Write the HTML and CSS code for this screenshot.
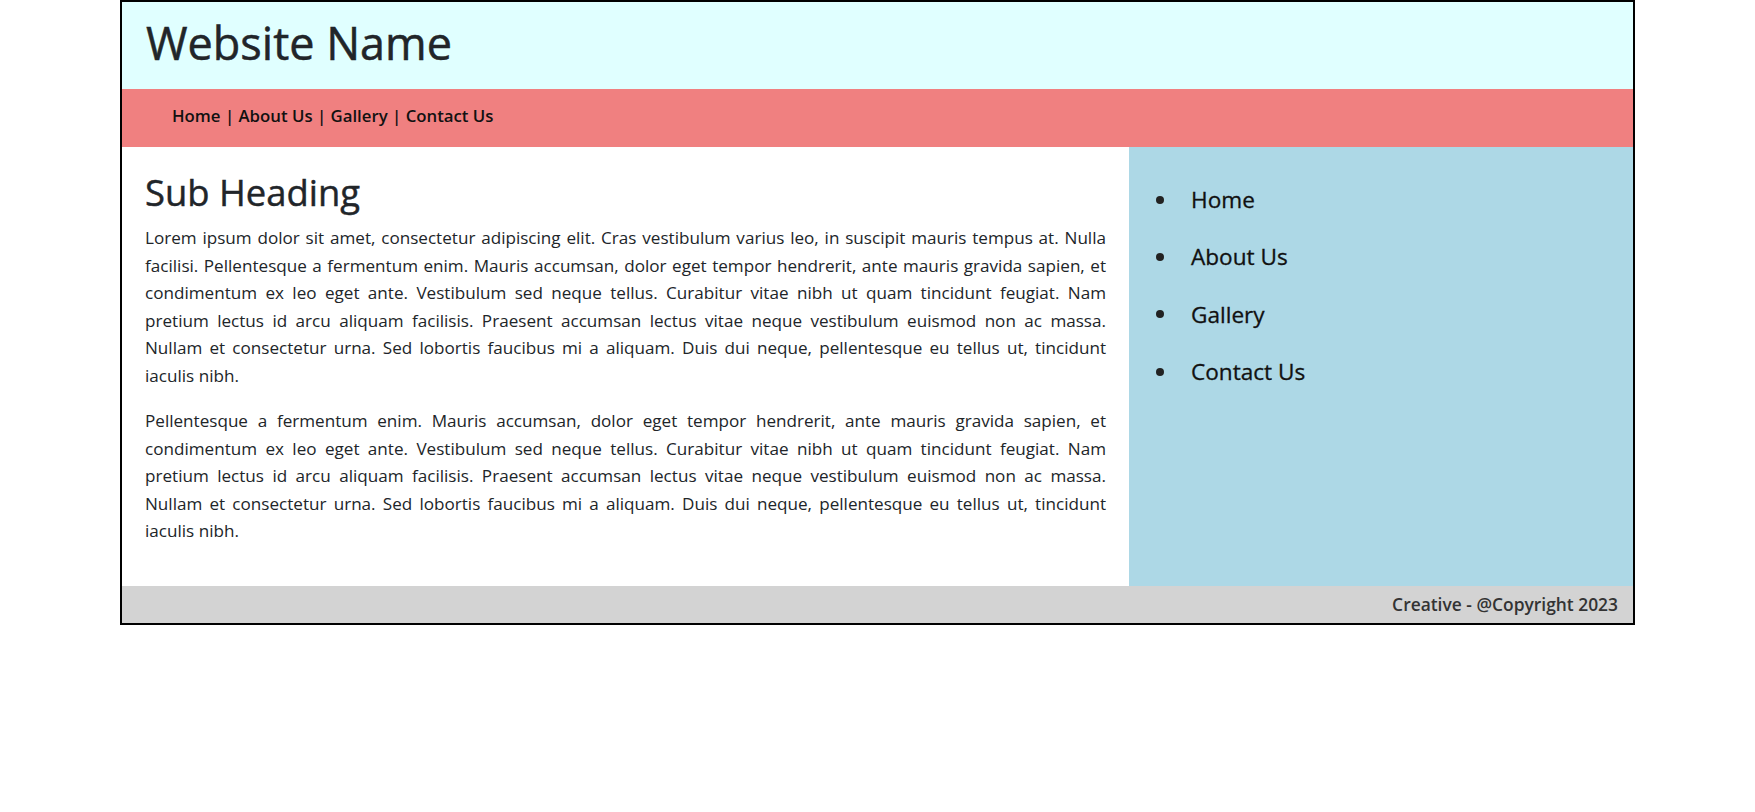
FILE: index.html
```html
<!DOCTYPE html>
<html lang="en">
<head>
<meta charset="utf-8">
<title>Website Name</title>
<link rel="stylesheet" href="styles.css">
</head>
<body>
<div class="page">
  <header class="site-header">
    <h1 class="site-title">Website Name</h1>
  </header>
  <nav class="topnav">Home | About Us | Gallery | Contact Us</nav>
  <div class="content">
    <main class="main">
      <h2 class="sub-heading">Sub Heading</h2>
      <p>Lorem ipsum dolor sit amet, consectetur adipiscing elit. Cras vestibulum varius leo, in suscipit mauris tempus at. Nulla facilisi. Pellentesque a fermentum enim. Mauris accumsan, dolor eget tempor hendrerit, ante mauris gravida sapien, et condimentum ex leo eget ante. Vestibulum sed neque tellus. Curabitur vitae nibh ut quam tincidunt feugiat. Nam pretium lectus id arcu aliquam facilisis. Praesent accumsan lectus vitae neque vestibulum euismod non ac massa. Nullam et consectetur urna. Sed lobortis faucibus mi a aliquam. Duis dui neque, pellentesque eu tellus ut, tincidunt iaculis nibh.</p>
      <p>Pellentesque a fermentum enim. Mauris accumsan, dolor eget tempor hendrerit, ante mauris gravida sapien, et condimentum ex leo eget ante. Vestibulum sed neque tellus. Curabitur vitae nibh ut quam tincidunt feugiat. Nam pretium lectus id arcu aliquam facilisis. Praesent accumsan lectus vitae neque vestibulum euismod non ac massa. Nullam et consectetur urna. Sed lobortis faucibus mi a aliquam. Duis dui neque, pellentesque eu tellus ut, tincidunt iaculis nibh.</p>
    </main>
    <aside class="sidebar">
      <ul class="side-list">
        <li>Home</li>
        <li>About Us</li>
        <li>Gallery</li>
        <li>Contact Us</li>
      </ul>
    </aside>
  </div>
  <footer class="site-footer">Creative - @Copyright 2023</footer>
</div>
</body>
</html>
```
FILE: styles.css
```css
* { box-sizing: border-box; }

body {
  margin: 0;
  font-family: "Open Sans", "Noto Sans", sans-serif;
  font-size: 17.1px;
  line-height: 27.5px;
  color: #212529;
  background: #fff;
}

.page {
  width: 1515px;
  margin: 0 auto;
  border: 2px solid #000;
}

.site-header {
  background: #e0ffff;
  height: 87px;
  padding: 13px 24px 0;
}

.site-title {
  margin: 0;
  font-size: 45px;
  line-height: 55px;
  font-weight: 500;
  -webkit-text-stroke: 0.5px #212529;
}

.topnav {
  background: #f08080;
  height: 58px;
  padding: 0 50px 4px;
  display: flex;
  align-items: center;
  font-size: 16.8px;
  font-weight: 600;
  color: #111;
}

.content {
  display: flex;
}

.main {
  width: 1007px;
  padding: 23px 23px 23px;
}

.sub-heading {
  margin: 0 0 10px;
  font-size: 36.4px;
  line-height: 44px;
  font-weight: 500;
  -webkit-text-stroke: 0.45px #212529;
}

.main p {
  margin: 0 0 18.4px;
  text-align: justify;
}

.sidebar {
  flex: 1;
  background: #add8e6;
  padding: 24px 27px;
}

.side-list {
  list-style: none;
  margin: 0;
  padding: 0;
}

.side-list li {
  display: flex;
  align-items: center;
  height: 57.4px;
  font-size: 22.6px;
  font-weight: 500;
  color: #111;
  -webkit-text-stroke: 0.3px #111;
}

.side-list li::before {
  content: "";
  width: 8px;
  height: 8px;
  border-radius: 50%;
  background: #222;
  margin-right: 27px;
}

.site-footer {
  background: #d3d3d3;
  height: 37px;
  padding: 0 15px;
  display: flex;
  align-items: center;
  justify-content: flex-end;
  font-size: 17.4px;
  font-weight: 600;
  color: #333;
}
```
